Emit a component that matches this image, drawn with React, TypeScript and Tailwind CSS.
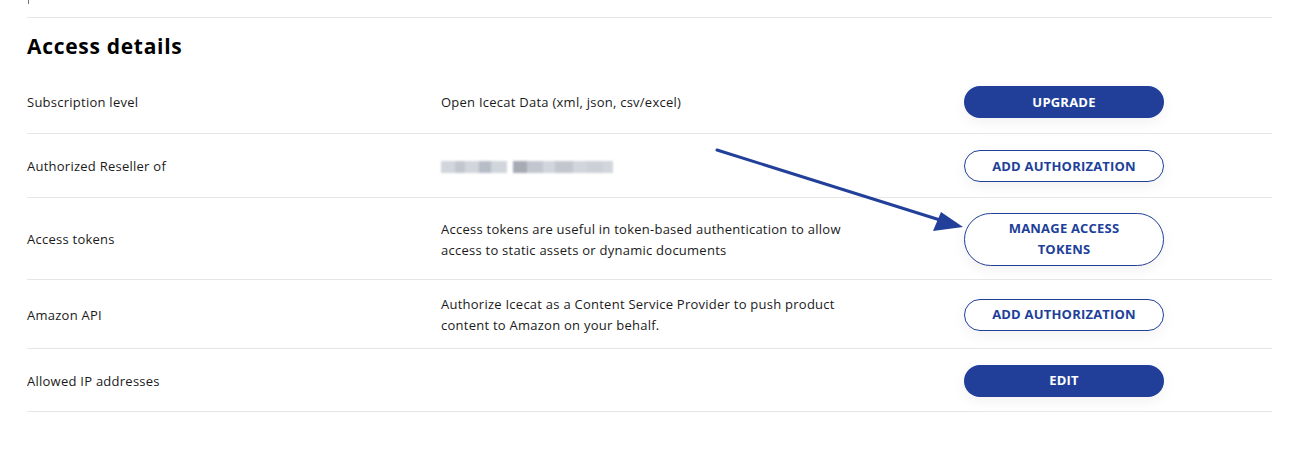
import React from "react";

type Row = {
  label: string;
  desc?: React.ReactNode;
  action: string;
  solid?: boolean;
  h: string;
};

// pixelated placeholder for the hidden reseller name
const blurBlocks = [
  "w-[14px] bg-gray-300",
  "w-[10px] bg-gray-400/60",
  "w-[14px] bg-gray-300",
  "w-[12px] bg-gray-400/70",
  "w-[16px] bg-gray-300",
  "w-[6px] bg-transparent",
  "w-[14px] bg-gray-500/60",
  "w-[16px] bg-gray-400/60",
  "w-[12px] bg-gray-300",
  "w-[18px] bg-gray-400/60",
  "w-[14px] bg-gray-300",
  "w-[16px] bg-gray-400/50",
  "w-[10px] bg-gray-300",
];

const rows: Row[] = [
  {
    label: "Subscription level",
    desc: "Open Icecat Data (xml, json, csv/excel)",
    action: "UPGRADE",
    solid: true,
    h: "h-[64px]",
  },
  {
    label: "Authorized Reseller of",
    desc: (
      <div className="flex h-[12px] items-stretch blur-[0.8px]">
        {blurBlocks.map((c, i) => (
          <div key={i} className={c} />
        ))}
      </div>
    ),
    action: "ADD AUTHORIZATION",
    h: "h-[64px]",
  },
  {
    label: "Access tokens",
    desc: (
      <>
        Access tokens are useful in token-based authentication to allow
        <br />
        access to static assets or dynamic documents
      </>
    ),
    action: "MANAGE ACCESS TOKENS",
    h: "h-[82px]",
  },
  {
    label: "Amazon API",
    desc: (
      <>
        Authorize Icecat as a Content Service Provider to push product
        <br />
        content to Amazon on your behalf.
      </>
    ),
    action: "ADD AUTHORIZATION",
    h: "h-[69px]",
  },
  {
    label: "Allowed IP addresses",
    action: "EDIT",
    solid: true,
    h: "h-[63px]",
  },
];

function ActionButton({ text, solid }: { text: string; solid?: boolean }) {
  const multi = text.length > 18;
  return (
    <button
      className={
        "w-[200px] rounded-full text-[13px] font-bold leading-[21px] tracking-[0.2px] shadow-[0_4px_14px_rgba(0,0,0,0.06)] " +
        (solid
          ? "h-[32px] bg-[#213f99] text-white"
          : multi
            ? "h-[53px] border border-[#213f99] bg-white px-10 text-[#213f99]"
            : "h-[32px] border border-[#213f99] bg-white text-[#213f99]")
      }
    >
      {text}
    </button>
  );
}

export default function App() {
  return (
    <div
      className="relative h-[462px] w-[1289px] bg-white text-[#1a1a1a]"
      style={{ fontFamily: '"Open Sans", "Liberation Sans", sans-serif' }}
    >
      <div className="mx-[27px] w-[1245px]">
        <div className="h-[18px] border-b border-[#e6e6e6]">
          <div className="ml-[1px] h-[4px] w-[1px] bg-gray-500" />
        </div>
        <h2 className="mt-[14px] h-[38px] text-[21px] font-bold leading-[28px] tracking-[0.7px] text-black">
          Access details
        </h2>
        {rows.map((r, i) => (
          <div
            key={i}
            className={
              "grid grid-cols-[414px_523px_1fr] items-center border-b border-[#e6e6e6] pt-[1px] text-[13px] leading-[21px] tracking-[0.25px] " +
              r.h
            }
          >
            <div className="pt-[1px]">{r.label}</div>
            <div className="pt-[1px]">{r.desc}</div>
            <div>
              <ActionButton text={r.action} solid={r.solid} />
            </div>
          </div>
        ))}
      </div>

      <svg
        className="pointer-events-none absolute left-0 top-0"
        width="1289"
        height="462"
      >
        <line
          x1="717"
          y1="150"
          x2="940"
          y2="220"
          stroke="#22409a"
          strokeWidth="3"
          strokeLinecap="round"
        />
        <polygon points="963,227 933,231 941,212" fill="#22409a" />
      </svg>
    </div>
  );
}
